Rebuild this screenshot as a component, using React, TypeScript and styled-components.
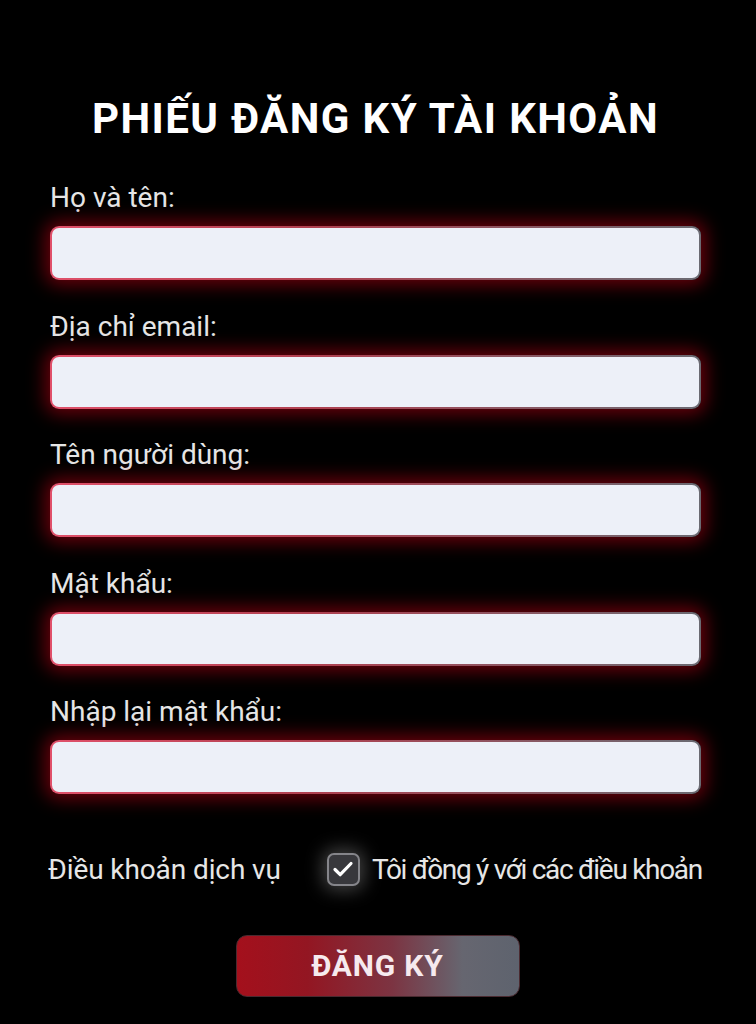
import styled, { createGlobalStyle } from 'styled-components';

const GlobalStyle = createGlobalStyle`
  html, body {
    margin: 0;
    padding: 0;
    background: #000;
  }
  body {
    font-family: Roboto, "Noto Sans", "Liberation Sans", sans-serif;
    color: #ececec;
  }
`;

const Page = styled.div`
  width: 756px;
  min-height: 1024px;
  background: #000;
  box-sizing: border-box;
  padding: 94px 55px 0 50px;
`;

const Title = styled.h1`
  margin: 0 0 37px;
  text-align: center;
  font-size: 42px;
  line-height: 50px;
  font-weight: 700;
  color: #fff;
  letter-spacing: 1.4px;
`;

const Form = styled.form`
  display: flex;
  flex-direction: column;
  gap: 29.5px;
`;

const Field = styled.div`
  display: flex;
  flex-direction: column;
  gap: 12px;
`;

const Label = styled.label`
  font-size: 28px;
  line-height: 33px;
  color: #e6e6e6;
`;

const Input = styled.input`
  height: 54px;
  box-sizing: border-box;
  width: 100%;
  border-radius: 9px;
  border: 2px solid transparent;
  background:
    linear-gradient(#edf0f8, #edf0f8) padding-box,
    linear-gradient(90deg, #e0506a, #b04050 40%, #6a6a72) border-box;
  box-shadow: 0 0 18px 5px rgba(175, 0, 18, 0.6);
  outline: none;
  font: inherit;
`;

const TermsRow = styled.div`
  display: flex;
  align-items: center;
  margin-top: 29px;
  height: 33px;
`;

const TermsLabel = styled.span`
  flex: none;
  white-space: nowrap;
  font-size: 28px;
  line-height: 33px;
  color: #e6e6e6;
  margin-left: -2px;
  letter-spacing: -0.1px;
`;

const Agree = styled.label`
  flex: none;
  display: flex;
  align-items: center;
  gap: 12px;
  margin-left: 46px;
  font-size: 28px;
  line-height: 33px;
  letter-spacing: -1.3px;
  color: #e6e6e6;
  white-space: nowrap;
`;

const Box = styled.span`
  flex: none;
  width: 33px;
  height: 33px;
  box-sizing: border-box;
  border-radius: 7px;
  border: 2px solid #85858a;
  background: #38383c;
  box-shadow: 0 0 18px 4px rgba(255, 255, 255, 0.26);
  display: flex;
  align-items: center;
  justify-content: center;
`;

const ButtonWrap = styled.div`
  display: flex;
  justify-content: center;
  padding-left: 4px;
  margin-top: 49px;
`;

const Submit = styled.button`
  width: 284px;
  height: 62px;
  border: 1px solid #4a2a30;
  border-radius: 11px;
  background: linear-gradient(90deg, #a4101c 0%, #931622 25%, #7c3442 55%, #666670 80%, #5e636e 100%);
  color: #f6eaee;
  font-family: Roboto, "Liberation Sans", sans-serif;
  font-size: 30px;
  font-weight: 700;
  letter-spacing: 0.8px;
  cursor: pointer;
`;

const fields = ['Họ và tên:', 'Địa chỉ email:', 'Tên người dùng:', 'Mật khẩu:', 'Nhập lại mật khẩu:'];

export default function App() {
  return (
    <>
      <GlobalStyle />
      <Page>
        <Title>PHIẾU ĐĂNG KÝ TÀI KHOẢN</Title>
        <Form onSubmit={(e) => e.preventDefault()}>
          {fields.map((f) => (
            <Field key={f}>
              <Label>{f}</Label>
              <Input type={f.includes('khẩu') ? 'password' : 'text'} />
            </Field>
          ))}
          <TermsRow>
            <TermsLabel>Điều khoản dịch vụ</TermsLabel>
            <Agree>
              <Box>
                <svg width="24" height="24" viewBox="0 0 24 24" fill="none">
                  <path d="M4 12.5l5.2 5.2L20 6.5" stroke="#fff" strokeWidth="3.2" strokeLinecap="round" strokeLinejoin="round" />
                </svg>
              </Box>
              Tôi đồng ý với các điều khoản
            </Agree>
          </TermsRow>
        </Form>
        <ButtonWrap>
          <Submit type="submit">ĐĂNG KÝ</Submit>
        </ButtonWrap>
      </Page>
    </>
  );
}
